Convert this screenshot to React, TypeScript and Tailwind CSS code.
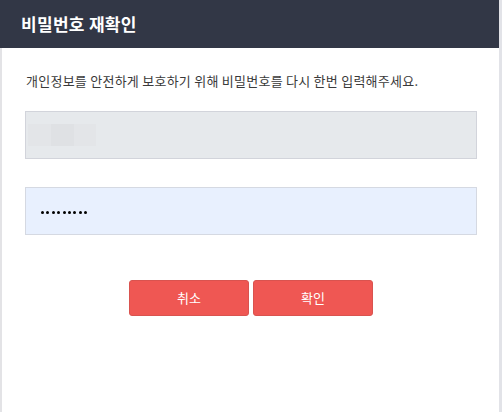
import React from "react";

export default function App() {
  return (
    <div
      className="flex h-[412px] w-[502px] overflow-hidden bg-white"
      style={{ fontFamily: '"Noto Sans CJK KR", "Noto Sans", sans-serif' }}
    >
      <div className="flex w-[499px] flex-col">
        {/* Header */}
        <div className="flex h-[48px] items-center bg-[#323746] pl-[21px]">
          <h1 className="text-[17px] font-bold tracking-[0.3px] text-white">비밀번호 재확인</h1>
        </div>

        <div className="flex flex-1">
          <div className="w-[2px] bg-[#e3e3e6]" />
          <div className="flex flex-1 flex-col pl-[23px]">
            <p className="ml-[1px] mt-[22px] text-[13px] leading-[22px] tracking-[0.25px] text-[#3a3a3a]">
              개인정보를 안전하게 보호하기 위해 비밀번호를 다시 한번 입력해주세요.
            </p>

            {/* ID (masked) */}
            <div className="mt-[19px] flex h-[48px] w-[452px] items-center border border-[#d2d4db] bg-[#e6e9ec] pl-[2px]">
              <div className="flex">
                <div className="h-[22px] w-[23px] bg-[#e3e5e8]" />
                <div className="h-[22px] w-[23px] bg-[#dfe1e4]" />
                <div className="h-[22px] w-[22px] bg-[#e3e5e8]" />
              </div>
            </div>

            {/* Password */}
            <div className="mt-[28px] flex h-[48px] w-[452px] items-center border border-[#d5d9e2] bg-[#e8f0fe] pl-[15px] pt-[2px]">
              <div className="flex gap-[2.4px]">
                {Array.from({ length: 9 }).map((_, i) => (
                  <span key={i} className="h-[3px] w-[3px] rounded-full bg-black" />
                ))}
              </div>
            </div>

            {/* Buttons */}
            <div className="ml-[104px] mt-[45px] flex gap-[4px]">
              <button className="h-[36px] w-[120px] rounded-[3px] border border-[#d9534f] bg-[#ef5753] text-[13px] text-white">
                취소
              </button>
              <button className="h-[36px] w-[120px] rounded-[3px] border border-[#d9534f] bg-[#ef5753] text-[13px] text-white">
                확인
              </button>
            </div>
          </div>
        </div>
      </div>
      <div className="w-[3px] bg-[#e2e3e8]" />
    </div>
  );
}
